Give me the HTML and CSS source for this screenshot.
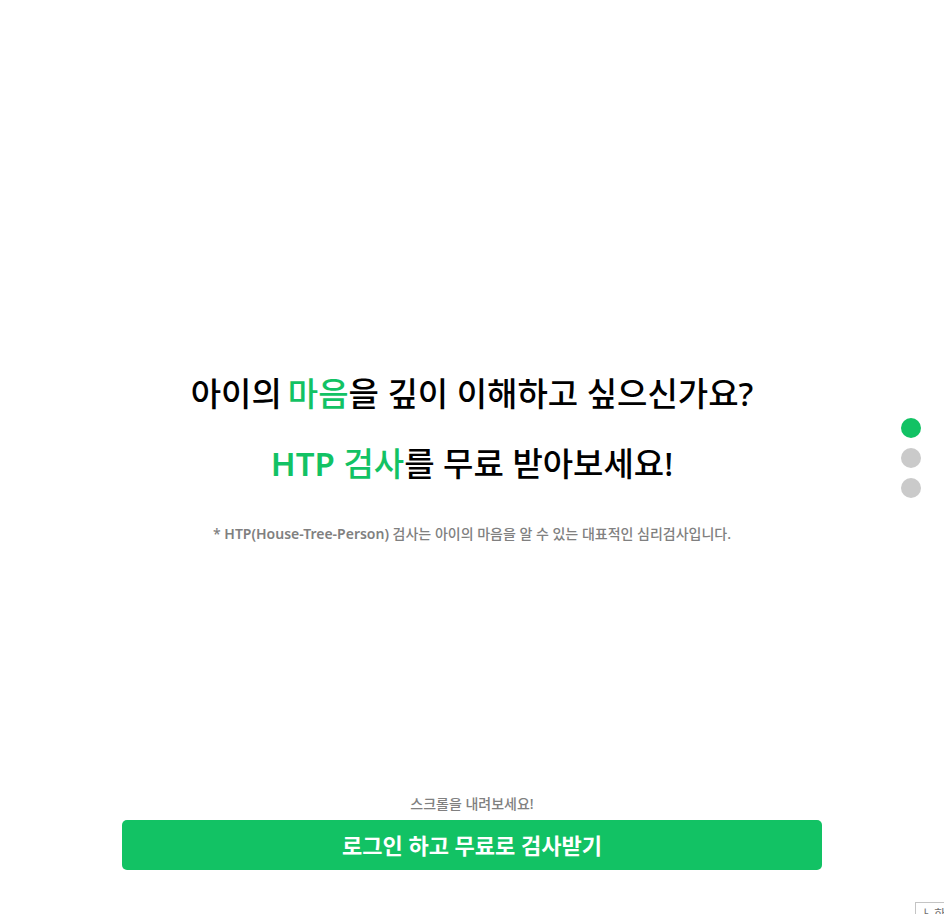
FILE: index.html
```html
<!DOCTYPE html>
<html lang="ko">
<head>
<meta charset="utf-8">
<title>HTP 검사</title>
<link rel="stylesheet" href="styles.css">
</head>
<body>
<main class="page">
  <section class="intro">
    <h1 class="headline">
      <span class="line">아이의<span class="accent accent-gap">마음</span>을 깊이 이해하고 싶으신가요?</span>
      <span class="line"><span class="accent"><span class="latin">HTP</span> 검사</span>를 무료 받아보세요!</span>
    </h1>
    <p class="note">* <span class="latin">HTP(House-Tree-Person)</span> 검사는 아이의 마음을 알 수 있는 대표적인 심리검사입니다.</p>
  </section>
  <footer class="bottom">
    <p class="hint">스크롤을 내려보세요!</p>
    <button class="login" type="button">로그인 하고 무료로 검사받기</button>
  </footer>
</main>
<nav class="dots" aria-label="섹션">
  <a class="dot active" href="#1" aria-label="1"></a>
  <a class="dot" href="#2" aria-label="2"></a>
  <a class="dot" href="#3" aria-label="3"></a>
</nav>
<div class="corner">ㅏ 한</div>
</body>
</html>
```

FILE: styles.css
```css
* {
  box-sizing: border-box;
}

body {
  margin: 0;
  background: #fff;
  color: #000;
  font-family: "Noto Sans", "Noto Sans CJK KR", sans-serif;
  overflow: hidden;
}

.page {
  display: flex;
  flex-direction: column;
  height: 100vh;
  padding: 0 24px 44px;
  text-align: center;
}

.intro {
  flex: 1;
  display: flex;
  flex-direction: column;
  justify-content: center;
  padding-top: 108px;
}

.headline {
  margin: 0;
  font-size: 33px;
  font-weight: 500;
  line-height: 70px;
}

.line {
  display: block;
}

.latin {
  font-weight: 600;
}

.accent {
  color: #12c264;
}

.accent-gap {
  margin-left: 6px;
}

.note,
.hint {
  margin: 0;
  color: #808080;
  font-size: 14px;
  font-weight: 500;
  line-height: 20px;
}

.note {
  margin-top: 25px;
}

.bottom {
  width: 100%;
  max-width: 700px;
  margin: 0 auto;
}

.login {
  display: block;
  width: 100%;
  height: 50px;
  margin-top: 6px;
  padding: 0 0 2px;
  border: 0;
  border-radius: 5px;
  background: #12c264;
  color: #fff;
  font: inherit;
  font-size: 22px;
  font-weight: 700;
}

.dots {
  position: fixed;
  top: calc(50% + 1px);
  right: 23px;
  display: grid;
  gap: 10px;
  transform: translateY(-50%);
}

.dot {
  width: 20px;
  height: 20px;
  border-radius: 50%;
  background: #cacaca;
}

.dot.active {
  background: #12c264;
}

.corner {
  position: fixed;
  right: -12px;
  bottom: -12px;
  width: 41px;
  height: 24px;
  padding-left: 4px;
  border: 1px solid #c4c4c4;
  background: #fff;
  color: #707070;
  font-size: 12px;
  line-height: 24px;
  white-space: nowrap;
}
```
